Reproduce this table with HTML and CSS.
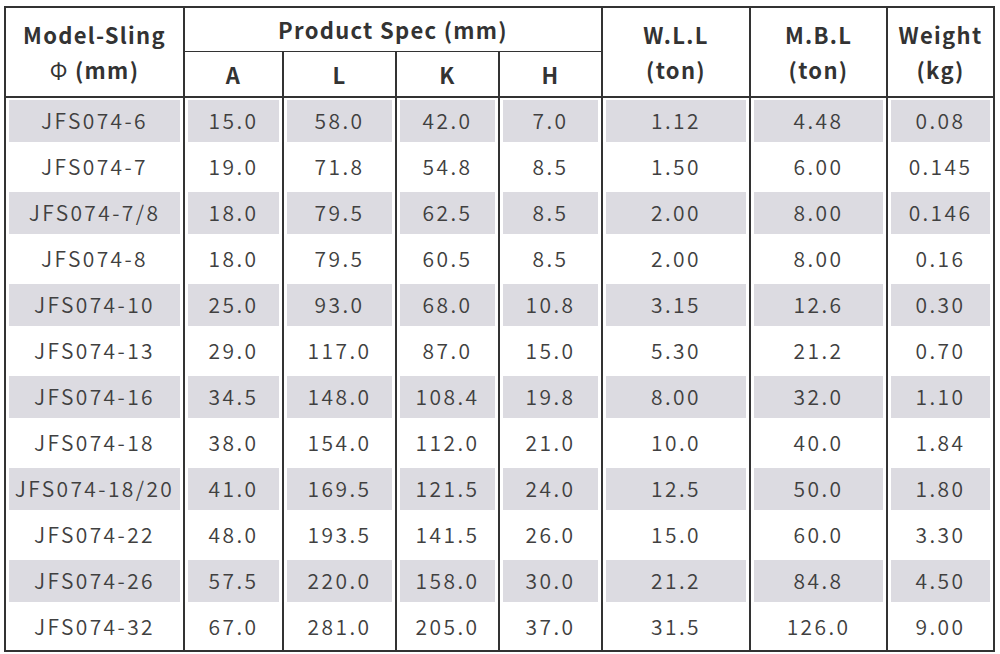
FILE: index.html
```html
<!DOCTYPE html>
<html>
<head>
<meta charset="utf-8">
<link rel="stylesheet" href="styles.css">
</head>
<body>
<table class="spec">
  <colgroup>
    <col class="c-model"><col class="c-a"><col class="c-l"><col class="c-k"><col class="c-h"><col class="c-wll"><col class="c-mbl"><col class="c-w">
  </colgroup>
  <thead>
    <tr class="h1">
      <th rowspan="2">Model-Sling<br><span class="phi">Φ</span> (mm)</th>
      <th colspan="4">Product Spec (mm)</th>
      <th rowspan="2">W.L.L<br>(ton)</th>
      <th rowspan="2">M.B.L<br>(ton)</th>
      <th rowspan="2">Weight<br>(kg)</th>
    </tr>
    <tr class="h2">
      <th>A</th><th>L</th><th>K</th><th>H</th>
    </tr>
  </thead>
  <tbody>
    <tr class="odd"><td>JFS074-6</td><td>15.0</td><td>58.0</td><td>42.0</td><td>7.0</td><td>1.12</td><td>4.48</td><td>0.08</td></tr>
    <tr><td>JFS074-7</td><td>19.0</td><td>71.8</td><td>54.8</td><td>8.5</td><td>1.50</td><td>6.00</td><td>0.145</td></tr>
    <tr class="odd"><td>JFS074-7/8</td><td>18.0</td><td>79.5</td><td>62.5</td><td>8.5</td><td>2.00</td><td>8.00</td><td>0.146</td></tr>
    <tr><td>JFS074-8</td><td>18.0</td><td>79.5</td><td>60.5</td><td>8.5</td><td>2.00</td><td>8.00</td><td>0.16</td></tr>
    <tr class="odd"><td>JFS074-10</td><td>25.0</td><td>93.0</td><td>68.0</td><td>10.8</td><td>3.15</td><td>12.6</td><td>0.30</td></tr>
    <tr><td>JFS074-13</td><td>29.0</td><td>117.0</td><td>87.0</td><td>15.0</td><td>5.30</td><td>21.2</td><td>0.70</td></tr>
    <tr class="odd"><td>JFS074-16</td><td>34.5</td><td>148.0</td><td>108.4</td><td>19.8</td><td>8.00</td><td>32.0</td><td>1.10</td></tr>
    <tr><td>JFS074-18</td><td>38.0</td><td>154.0</td><td>112.0</td><td>21.0</td><td>10.0</td><td>40.0</td><td>1.84</td></tr>
    <tr class="odd"><td>JFS074-18/20</td><td>41.0</td><td>169.5</td><td>121.5</td><td>24.0</td><td>12.5</td><td>50.0</td><td>1.80</td></tr>
    <tr><td>JFS074-22</td><td>48.0</td><td>193.5</td><td>141.5</td><td>26.0</td><td>15.0</td><td>60.0</td><td>3.30</td></tr>
    <tr class="odd"><td>JFS074-26</td><td>57.5</td><td>220.0</td><td>158.0</td><td>30.0</td><td>21.2</td><td>84.8</td><td>4.50</td></tr>
    <tr><td>JFS074-32</td><td>67.0</td><td>281.0</td><td>205.0</td><td>37.0</td><td>31.5</td><td>126.0</td><td>9.00</td></tr>
  </tbody>
</table>
</body>
</html>
```

FILE: styles.css
```css
html, body {
  margin: 0;
  padding: 0;
  background: #fff;
}
body {
  padding: 6px 0 0 4px;
  font-family: "Noto Sans CJK KR", "Noto Sans", sans-serif;
}
.spec {
  border-collapse: collapse;
  table-layout: fixed;
  width: 991px;
  border: 2px solid #333;
  color: #404040;
}
.c-model { width: 179px; }
.c-a { width: 99px; }
.c-l { width: 113px; }
.c-k { width: 103px; }
.c-h { width: 103px; }
.c-wll { width: 148px; }
.c-mbl { width: 137px; }
.c-w { width: 107px; }

.spec th, .spec td {
  border-left: 2px solid #333;
  border-right: 2px solid #333;
  text-align: center;
  padding: 0;
  white-space: nowrap;
  overflow: hidden;
}
.spec th {
  font-weight: 700;
  font-size: 22px;
  color: #333;
  line-height: 35px;
  letter-spacing: 1.3px;
}
.h1 th { height: 43px; }
.h1 th[colspan] {
  border-bottom: 1.5px solid #333;
  vertical-align: middle;
}
.h2 th { height: 44px; }
.phi { font-weight: 400; }
thead tr:last-child th,
.h1 th[rowspan] {
  border-bottom: 2px solid #333;
}
.spec td {
  height: 44px;
  font-size: 21px;
  letter-spacing: 2.4px;
  font-weight: 350;
  line-height: 44px;
  padding-bottom: 2px;
}
.spec tbody tr.odd td {
  background: #dcdbe1;
  box-shadow: inset 3px 2px 0 #fff, inset -3px -2px 0 #fff;
}
```
